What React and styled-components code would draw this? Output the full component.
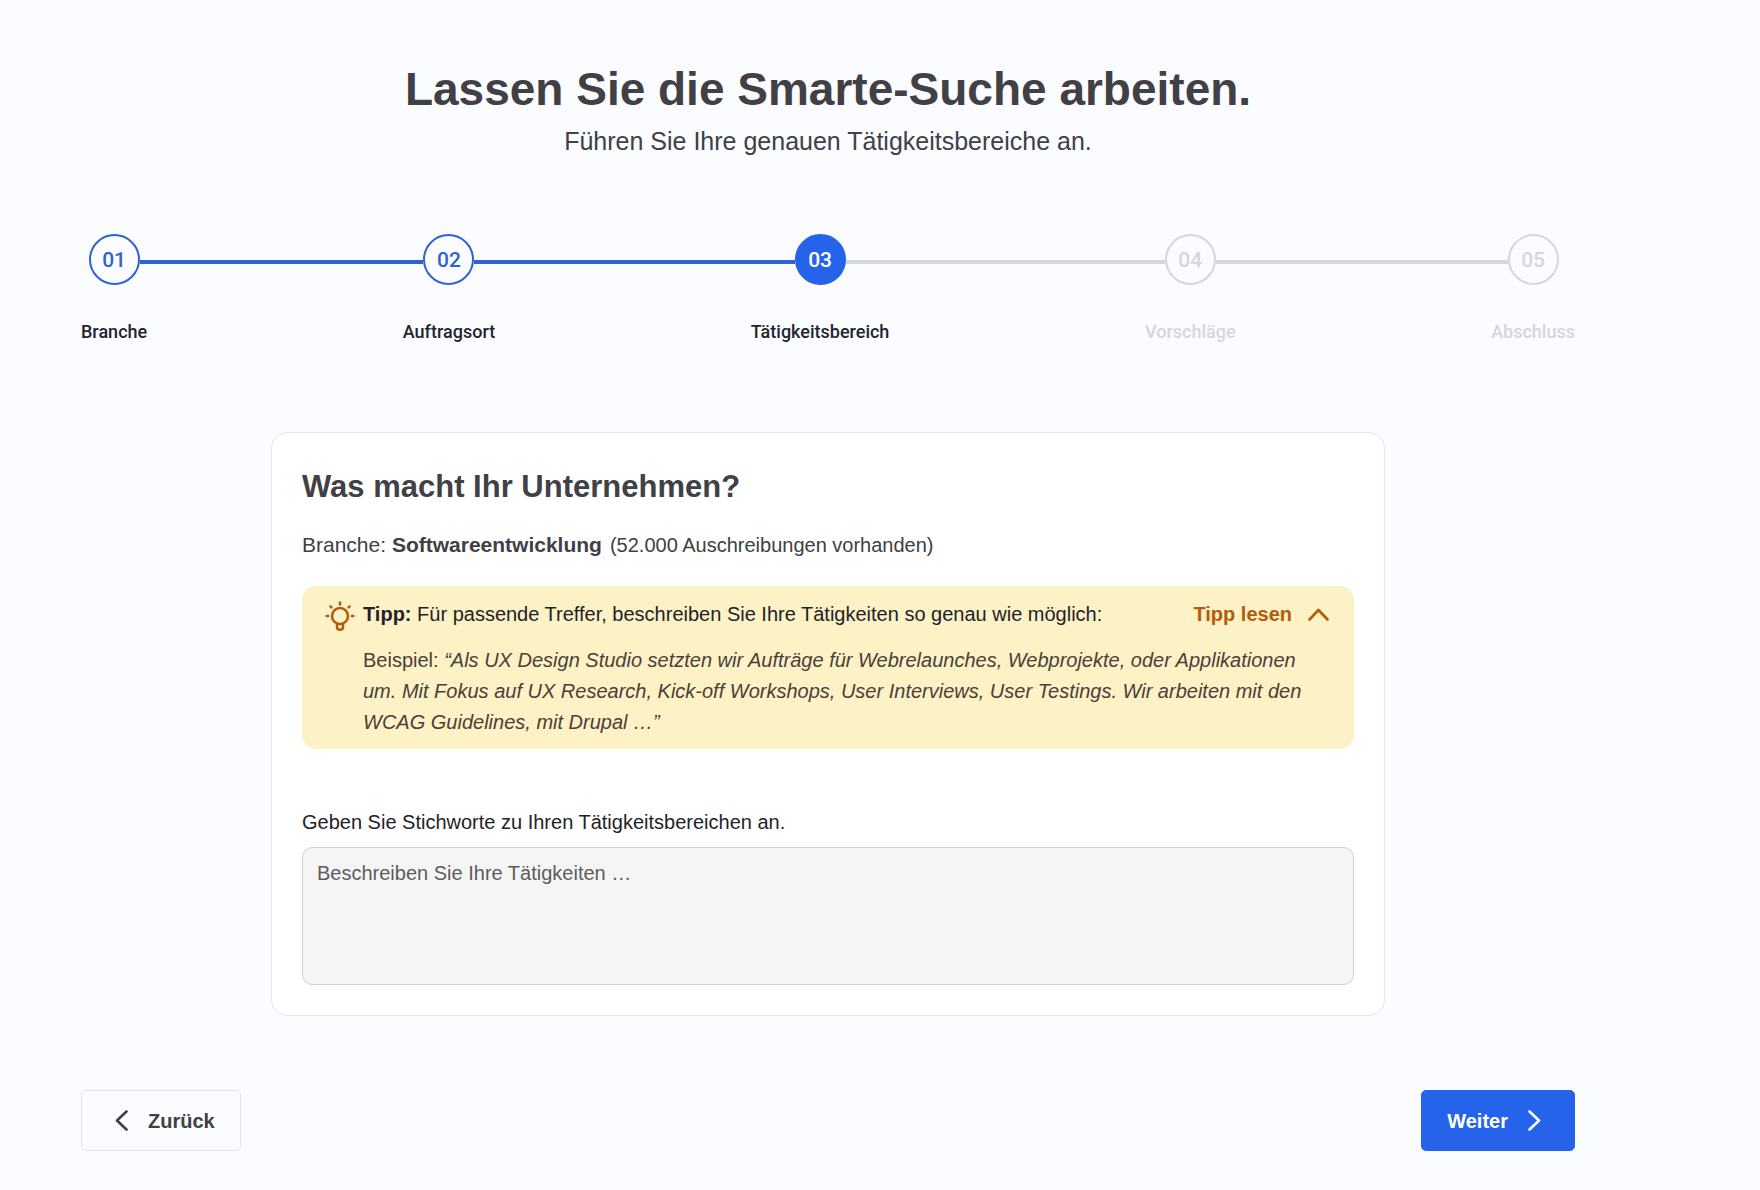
import React, { Fragment, useState } from "react";
import styled, { createGlobalStyle } from "styled-components";

const sans = '"Liberation Sans", Arial, sans-serif';
const roboto = 'Roboto, "Liberation Sans", sans-serif';
const blue = "#2563eb";
const blueLine = "#2f63d3";
const grey = "#d4d7db";
const ink = "#404045";
const amber = "#b45b0c";

const GlobalStyle = createGlobalStyle`
  *, *::before, *::after { box-sizing: border-box; }
  body { margin: 0; background: #fbfcff; color: ${ink}; font-family: ${sans}; }
`;

const Page = styled.main`
  padding: 61px 185px 38px 81px;
`;

const Header = styled.header`
  display: flex;
  flex-direction: column;
  align-items: center;
  gap: 6px;
  text-align: center;
`;

const Title = styled.h1`
  margin: 0;
  font-size: 46px;
  line-height: 56px;
  font-weight: 700;
`;

const Subtitle = styled.p`
  margin: 0;
  font-size: 25px;
  line-height: 36px;
`;

const Stepper = styled.ol`
  display: flex;
  margin: 75px 0 0;
  padding: 0;
  list-style: none;
`;

const Step = styled.li`
  display: flex;
  flex-direction: column;
  gap: 35px;
`;

const Track = styled.div`
  display: flex;
  align-items: center;
  height: 51px;
`;

const Line = styled.span`
  flex: 1;
  height: 4px;
  margin-top: 5px;
  background: ${(p) => (p.$tone === "done" ? blueLine : p.$tone === "open" ? grey : "transparent")};
`;

const Connector = styled(Track).attrs({ as: "li", "aria-hidden": true })`
  flex: 1;
`;

const Circle = styled.span`
  display: grid;
  place-items: center;
  width: 51px;
  height: 51px;
  border: 2px solid ${(p) => (p.$state === "open" ? grey : p.$state === "done" ? blueLine : blue)};
  border-radius: 50%;
  background: ${(p) => (p.$state === "current" ? blue : "transparent")};
  color: ${(p) => (p.$state === "open" ? grey : p.$state === "done" ? blueLine : "#fff")};
  font: 500 21px/24px ${roboto};
`;

const StepLabel = styled.span`
  color: ${(p) => (p.$state === "open" ? grey : "#1f2530")};
  font: 500 18px/24px ${roboto};
  text-align: center;
`;

const Card = styled.section`
  margin: 88px 190px 0;
  padding: 34px 30px 30px;
  border: 1px solid #e3e5eb;
  border-radius: 16px;
  background: #fff;
`;

const CardTitle = styled.h2`
  margin: 0 0 23px;
  font-size: 31px;
  line-height: 40px;
  font-weight: 700;
`;

const Text = styled.p`
  margin: 0;
  font-size: 20px;
  line-height: 30px;
`;

const Summary = styled(Text)`
  font-size: 21px;
`;

const Count = styled.span`
  margin-left: 8px;
  font-size: 20px;
`;

const Tip = styled.div`
  display: grid;
  grid-template-columns: 30px 1fr;
  column-gap: 8px;
  margin: 26px 0 58px;
  padding: 13px 25px 11px 23px;
  border-radius: 14px;
  background: #fdf1c6;
`;

const BulbIcon = styled.svg`
  grid-row: 1 / span 2;
  width: 30px;
  height: 30px;
  margin-top: 2px;
`;

const TipHead = styled.div`
  display: flex;
  justify-content: space-between;
  color: #1f2328;
`;

const TipToggle = styled.button`
  display: flex;
  align-items: center;
  gap: 16px;
  padding: 0;
  border: 0;
  background: none;
  color: ${amber};
  font: 700 20px/30px ${sans};
  cursor: pointer;
`;

const Example = styled.p`
  grid-column: 2;
  margin: 16px 0 0;
  padding-right: 8px;
  color: #4b4039;
  font-size: 20px;
  line-height: 31px;
`;

const FieldLabel = styled.label`
  display: block;
  margin-bottom: 10px;
  color: #1f2328;
  font-size: 20px;
  line-height: 30px;
`;

const Field = styled.textarea`
  display: block;
  width: 100%;
  height: 138px;
  padding: 10px 14px;
  border: 1px solid #d2d2d4;
  border-radius: 10px;
  background: #f5f5f5;
  color: ${ink};
  font: 400 20px/30px ${sans};
  resize: none;

  &::placeholder { color: #5c5c5e; opacity: 1; }
`;

const Actions = styled.nav`
  display: flex;
  justify-content: space-between;
  margin-top: 74px;
`;

const ActionButton = styled.button`
  display: flex;
  align-items: center;
  gap: 20px;
  height: 61px;
  padding: 0 ${(p) => (p.$primary ? "33px 0 25px" : "25px 0 33px")};
  border: 1px solid ${(p) => (p.$primary ? blue : "#e1e3e8")};
  border-radius: 5px;
  background: ${(p) => (p.$primary ? blue : "transparent")};
  color: ${(p) => (p.$primary ? "#fff" : ink)};
  font: 700 20px/30px ${sans};
  cursor: pointer;
`;

const paths = {
  up: { w: 21, h: 13, d: "M1.5 11.5 10.5 2l9 9.5" },
  left: { w: 13, h: 21, d: "M11.5 1.5 2 10.5l9.5 9" },
  right: { w: 13, h: 21, d: "M1.5 1.5 11 10.5l-9.5 9" },
};

function Chevron({ dir }) {
  const { w, h, d } = paths[dir];
  return (
    <svg width={w} height={h} viewBox={`0 0 ${w} ${h}`} fill="none" stroke="currentColor"
      strokeWidth="2.6" strokeLinecap="round" strokeLinejoin="round" aria-hidden="true">
      <path d={d} />
    </svg>
  );
}

function Bulb() {
  return (
    <BulbIcon viewBox="0 0 30 30" fill="none" stroke={amber} strokeWidth="2.5"
      strokeLinecap="round" strokeLinejoin="round" aria-hidden="true">
      <circle cx="15" cy="15" r="8" />
      <path d="M12 23v3.2a3 2.5 0 0 0 6 0V23" />
      <path d="M15 1.6v2M1.6 15h1.6M26.8 15h1.6M5.4 5.4l1 1M24.6 5.4l-1 1" />
    </BulbIcon>
  );
}

const steps = [
  ["01", "Branche", "done"],
  ["02", "Auftragsort", "done"],
  ["03", "Tätigkeitsbereich", "current"],
  ["04", "Vorschläge", "open"],
  ["05", "Abschluss", "open"],
];

const toneBefore = (i) => (i === 0 ? "none" : steps[i][2] === "open" ? "open" : "done");
const toneAfter = (i) => (i === steps.length - 1 ? "none" : toneBefore(i + 1));

export default function App() {
  const [open, setOpen] = useState(true);
  return (
    <Page>
      <GlobalStyle />
      <Header>
        <Title>Lassen Sie die Smarte-Suche arbeiten.</Title>
        <Subtitle>Führen Sie Ihre genauen Tätigkeitsbereiche an.</Subtitle>
      </Header>

      <Stepper>
        {steps.map(([number, label, state], i) => (
          <Fragment key={number}>
            {i > 0 && <Connector><Line $tone={toneBefore(i)} /></Connector>}
            <Step aria-current={state === "current" ? "step" : undefined}>
              <Track>
                <Line $tone={toneBefore(i)} />
                <Circle $state={state}>{number}</Circle>
                <Line $tone={toneAfter(i)} />
              </Track>
              <StepLabel $state={state}>{label}</StepLabel>
            </Step>
          </Fragment>
        ))}
      </Stepper>

      <Card>
        <CardTitle>Was macht Ihr Unternehmen?</CardTitle>
        <Summary>
          Branche: <strong>Softwareentwicklung</strong>
          <Count>(52.000 Auschreibungen vorhanden)</Count>
        </Summary>
        <Tip>
          <Bulb />
          <TipHead>
            <Text><strong>Tipp:</strong> Für passende Treffer, beschreiben Sie Ihre Tätigkeiten so genau wie möglich:</Text>
            <TipToggle type="button" aria-expanded={open} onClick={() => setOpen(!open)}>
              Tipp lesen <Chevron dir="up" />
            </TipToggle>
          </TipHead>
          {open && (
            <Example>
              Beispiel: <em>“Als UX Design Studio setzten wir Aufträge für Webrelaunches, Webprojekte, oder Applikationen um. Mit Fokus auf UX Research, Kick-off Workshops, User Interviews, User Testings. Wir arbeiten mit den WCAG Guidelines, mit Drupal …”</em>
            </Example>
          )}
        </Tip>
        <FieldLabel htmlFor="keywords">Geben Sie Stichworte zu Ihren Tätigkeitsbereichen an.</FieldLabel>
        <Field id="keywords" placeholder="Beschreiben Sie Ihre Tätigkeiten …" />
      </Card>

      <Actions>
        <ActionButton type="button"><Chevron dir="left" />Zurück</ActionButton>
        <ActionButton type="button" $primary>Weiter<Chevron dir="right" /></ActionButton>
      </Actions>
    </Page>
  );
}
